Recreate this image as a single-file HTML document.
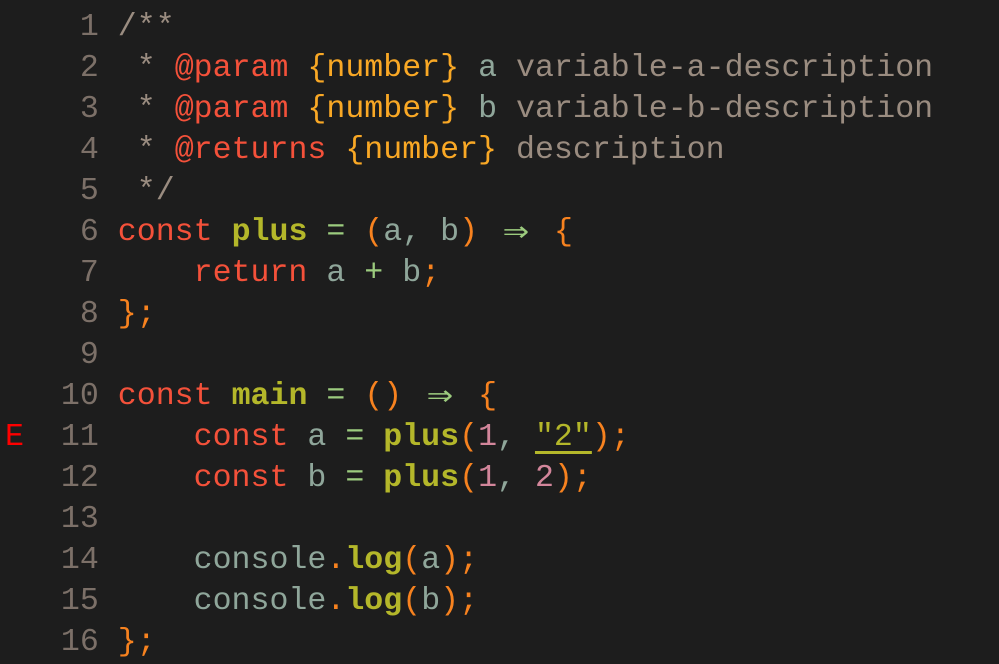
<!DOCTYPE html>
<html><head><style>
html,body{margin:0;background:#1d1d1d;width:999px;height:664px;overflow:hidden}
pre{margin:0;position:absolute;top:7px;left:23px;font-family:"Liberation Mono",monospace;font-size:31.6px;line-height:41px;color:#8fa69a;white-space:pre}
.n{color:#7c7068}.k{color:#f4513a}.f{color:#b4b72a;font-weight:bold}.o{color:#9ccb7e}.p{color:#f7821f}.m{color:#d3869b}
.c{color:#9a8c80}.t{color:#f4513a}.y{color:#f9a825}.e{color:#ff0000;position:absolute;left:5px;top:417px;font-family:"Liberation Mono",monospace;font-size:31.6px;line-height:41px}.s{color:#b4b72a;text-decoration:underline;text-underline-offset:6px}
.a{display:inline-block;width:38px;text-align:center;color:#9ccb7e;font-size:36px;line-height:41px;vertical-align:top;transform:scaleX(1.2)}
</style></head><body><div class="e">E</div><pre><span class="n">   1 </span><span class="c">/**</span>
<span class="n">   2 </span><span class="c"> * </span><span class="t">@param</span> <span class="y">{number}</span> <span>a</span> <span class="c">variable-a-description</span>
<span class="n">   3 </span><span class="c"> * </span><span class="t">@param</span> <span class="y">{number}</span> <span>b</span> <span class="c">variable-b-description</span>
<span class="n">   4 </span><span class="c"> * </span><span class="t">@returns</span> <span class="y">{number}</span> <span class="c">description</span>
<span class="n">   5 </span><span class="c"> */</span>
<span class="n">   6 </span><span class="k">const</span> <span class="f">plus</span> <span class="o">=</span> <span class="p">(</span>a, b<span class="p">)</span> <span class="a">⇒</span> <span class="p">{</span>
<span class="n">   7 </span>    <span class="k">return</span> a <span class="o">+</span> b<span class="p">;</span>
<span class="n">   8 </span><span class="p">};</span>
<span class="n">   9 </span>
<span class="n">  10 </span><span class="k">const</span> <span class="f">main</span> <span class="o">=</span> <span class="p">()</span> <span class="a">⇒</span> <span class="p">{</span>
<span class="n">  11 </span>    <span class="k">const</span> a <span class="o">=</span> <span class="f">plus</span><span class="p">(</span><span class="m">1</span>, <span class="s">"2"</span><span class="p">);</span>
<span class="n">  12 </span>    <span class="k">const</span> b <span class="o">=</span> <span class="f">plus</span><span class="p">(</span><span class="m">1</span>, <span class="m">2</span><span class="p">);</span>
<span class="n">  13 </span>
<span class="n">  14 </span>    console<span class="p">.</span><span class="f">log</span><span class="p">(</span>a<span class="p">);</span>
<span class="n">  15 </span>    console<span class="p">.</span><span class="f">log</span><span class="p">(</span>b<span class="p">);</span>
<span class="n">  16 </span><span class="p">};</span></pre></body></html>
